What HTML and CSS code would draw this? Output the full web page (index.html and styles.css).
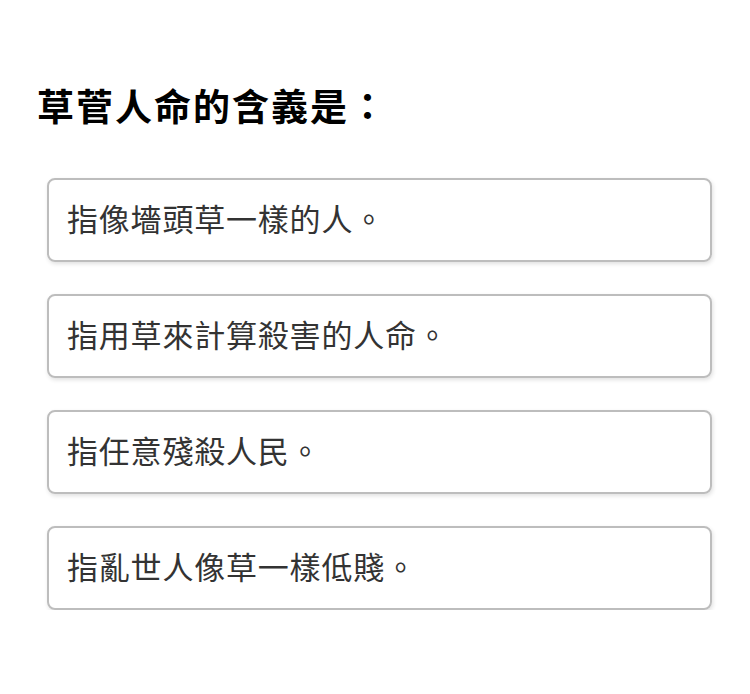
FILE: index.html
```html
<!DOCTYPE html>
<html lang="zh-Hant">
<head>
<meta charset="utf-8">
<link rel="stylesheet" href="styles.css">
</head>
<body>
<div class="quiz">
  <h1 class="question">草菅人命的含義是：</h1>
  <div class="options">
    <div class="option">指像墻頭草一樣的人。</div>
    <div class="option">指用草來計算殺害的人命。</div>
    <div class="option">指任意殘殺人民。</div>
    <div class="option">指亂世人像草一樣低賤。</div>
  </div>
</div>
</body>
</html>
```
FILE: styles.css
```css
html, body {
  margin: 0;
  padding: 0;
  background: #fff;
}
body {
  font-family: "Noto Sans CJK TC", "Noto Sans", sans-serif;
}
.quiz {
  padding: 81px 38px 0 37px;
}
.question {
  margin: 0;
  font-size: 37px;
  letter-spacing: 2px;
  line-height: 48px;
  font-weight: 700;
  color: #000;
}
.options {
  display: flex;
  flex-direction: column;
  gap: 32px;
  margin: 49px 0 0 10px;
  width: 665px;
}
.option {
  box-sizing: border-box;
  height: 84px;
  display: flex;
  align-items: center;
  padding: 0 18px 5px;
  border: 2px solid #bdbdbd;
  border-radius: 8px;
  box-shadow: 1px 2px 4px rgba(0,0,0,0.12);
  font-size: 31px;
  letter-spacing: 0.8px;
  color: #333;
}
```
